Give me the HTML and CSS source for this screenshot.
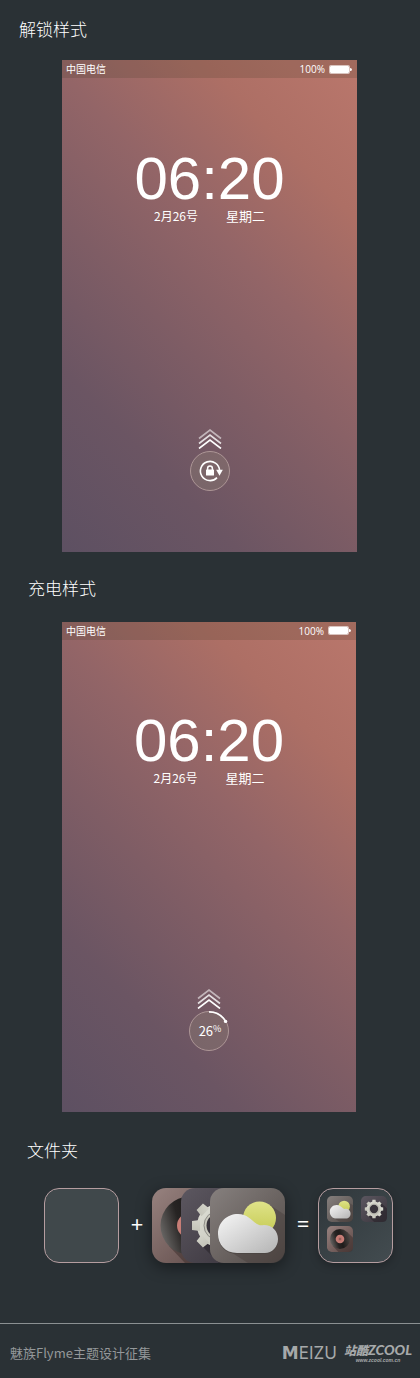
FILE: index.html
```html
<!DOCTYPE html>
<html lang="zh-CN">
<head>
  <meta charset="UTF-8" />
  <title>魅族Flyme主题设计征集</title>
  <meta name="viewport" content="width=device-width, initial-scale=1.0">
  <link rel="stylesheet" href="styles.css">
</head>
<body>

  <!-- shared app icons -->
  <svg class="sprite" width="0" height="0" aria-hidden="true">
    <defs>
      <linearGradient id="weather-bg" x1="0" y1="0" x2="1" y2="1">
        <stop offset="0" stop-color="#86807e" />
        <stop offset="1" stop-color="#514946" />
      </linearGradient>
      <linearGradient id="gear-bg" x1="0" y1="0" x2="1" y2="1">
        <stop offset="0" stop-color="#5c5760" />
        <stop offset="1" stop-color="#38333b" />
      </linearGradient>
      <linearGradient id="music-bg" x1="0" y1="0" x2="1" y2="1">
        <stop offset="0" stop-color="#97827f" />
        <stop offset="1" stop-color="#5b4644" />
      </linearGradient>
      <linearGradient id="sun" x1="0" y1="0" x2="0" y2="1">
        <stop offset="0" stop-color="#dfe389" />
        <stop offset="1" stop-color="#c5ca52" />
      </linearGradient>
      <linearGradient id="cloud" x1="0" y1="0" x2="1" y2="1">
        <stop offset="0" stop-color="#f6f6f6" />
        <stop offset="1" stop-color="#b4b4b4" />
      </linearGradient>
      <linearGradient id="gear" x1="0" y1="0" x2="1" y2="1">
        <stop offset="0" stop-color="#dedfd6" />
        <stop offset="1" stop-color="#c3c3b8" />
      </linearGradient>
      <linearGradient id="disc" x1="0" y1="0.65" x2="1" y2="0.35">
        <stop offset="0" stop-color="#6a6866" />
        <stop offset="0.35" stop-color="#272423" />
        <stop offset="0.55" stop-color="#1f1c1b" />
        <stop offset="1" stop-color="#4d4845" />
      </linearGradient>
    </defs>

    <symbol id="icon-weather" viewBox="0 0 75 75">
      <rect width="75" height="75" rx="14" fill="url(#weather-bg)" />
      <path d="M60 17L75 27V61Q75 75 61 75H38L16 61Z" fill="#463e3b" opacity="0.45" />
      <circle cx="49.5" cy="30" r="16.5" fill="url(#sun)" />
      <path d="M27 66C15 66 8 57 8 47L68 52C68 60 62 66 55 66Z" fill="#4a4442" opacity="0.7" />
      <path d="M27 65C15 65 8 56 8 46C8 34 17 26 28 26C37 26 41 32 47 36C50 38 52 37 54 37C62 37 68 43 68 51C68 59 62 65 55 65Z" fill="url(#cloud)" />
    </symbol>

    <symbol id="icon-settings" viewBox="0 0 75 75">
      <rect width="75" height="75" rx="14" fill="url(#gear-bg)" />
      <path d="M56 18L75 36V61Q75 75 61 75H38L19 56Z" fill="#29252c" opacity="0.6" />
      <g fill="url(#gear)">
        <circle cx="37.5" cy="37.5" r="21.5" />
        <path d="M32 19L33 11H42L43 19ZM32 56L33 64H42L43 56Z" />
        <path d="M32 19L33 11H42L43 19ZM32 56L33 64H42L43 56Z" transform="rotate(45 37.5 37.5)" />
        <path d="M32 19L33 11H42L43 19ZM32 56L33 64H42L43 56Z" transform="rotate(90 37.5 37.5)" />
        <path d="M32 19L33 11H42L43 19ZM32 56L33 64H42L43 56Z" transform="rotate(135 37.5 37.5)" />
      </g>
      <circle cx="37.5" cy="37.5" r="14.5" fill="#c9c9be" stroke="#8d8c86" />
      <circle cx="37.5" cy="37.5" r="12" fill="#39353c" />
    </symbol>

    <symbol id="icon-music" viewBox="0 0 75 75">
      <rect width="75" height="75" rx="14" fill="url(#music-bg)" />
      <path d="M58 17L75 34V61Q75 75 61 75H33L17 58Z" fill="#3a2b2a" opacity="0.5" />
      <circle cx="37.5" cy="37.5" r="29" fill="url(#disc)" />
      <circle cx="37.5" cy="37.5" r="12.5" fill="#c77d76" />
      <circle cx="37.5" cy="37.5" r="5" fill="none" stroke="#a8625c" />
      <circle cx="37.5" cy="37.5" r="2" fill="#3a2b2a" />
    </symbol>

    <symbol id="arrows" viewBox="0 0 24 20">
      <g fill="none" stroke="#fff" stroke-width="1.6">
        <path d="M1 9.5L12 1L23 9.5" opacity="0.55" />
        <path d="M1 14.5L12 6L23 14.5" opacity="0.8" />
        <path d="M1 19.5L12 11L23 19.5" />
      </g>
    </symbol>

    <symbol id="battery" viewBox="0 0 23 9">
      <rect x="0.5" y="0.5" width="20" height="8" rx="1" fill="none" stroke="#fff" opacity="0.6" />
      <rect x="1" y="1" width="19" height="7" rx="1" fill="#fff" />
      <path d="M21 3Q23 3 23 4.5T21 6Z" fill="#fff" />
    </symbol>
  </svg>

  <section class="section unlock">
    <h2>解锁样式</h2>
    <div class="phone">
      <div class="status-bar">
        <span class="carrier">中国电信</span>
        <span class="power">100% <svg class="battery"><use href="#battery" /></svg></span>
      </div>
      <div class="clock">06:20</div>
      <div class="date">
        <span>2月26号</span>
        <span class="weekday">星期二</span>
      </div>
      <div class="slider">
        <svg class="arrows"><use href="#arrows" /></svg>
        <button class="knob" aria-label="解锁">
          <svg viewBox="1 1 38 38">
            <path d="M27 26.6A9.6 9.6 0 1 1 29.6 19.5" fill="none" stroke="#fff" stroke-width="1.6" />
            <path d="M26.2 18.8H32.8L29.5 24.8Z" fill="#fff" />
            <path d="M17.6 19.5V17.5A2.4 2.4 0 0 1 22.4 17.5V19.5" fill="none" stroke="#fff" stroke-width="1.5" />
            <rect x="16" y="18.5" width="8" height="6" rx="0.6" fill="#fff" />
          </svg>
        </button>
      </div>
    </div>
  </section>

  <section class="section charging">
    <h2>充电样式</h2>
    <div class="phone">
      <div class="status-bar">
        <span class="carrier">中国电信</span>
        <span class="power">100% <svg class="battery"><use href="#battery" /></svg></span>
      </div>
      <div class="clock">06:20</div>
      <div class="date">
        <span>2月26号</span>
        <span class="weekday">星期二</span>
      </div>
      <div class="slider">
        <svg class="arrows"><use href="#arrows" /></svg>
        <div class="knob">
          <svg viewBox="1 1 38 38">
            <path d="M20 0.8A19.2 19.2 0 0 1 36.6 10.4" fill="none" stroke="#fff" stroke-width="1.8" />
            <circle cx="36.6" cy="10.4" r="1.7" fill="#fff" />
          </svg>
          <span class="percent">26<small>%</small></span>
        </div>
      </div>
    </div>
  </section>

  <section class="section folders">
    <h2>文件夹</h2>
    <div class="equation">
      <div class="folder"></div>
      <span class="sign">+</span>
      <div class="stack">
        <svg class="app"><use href="#icon-music" /></svg>
        <svg class="app"><use href="#icon-settings" /></svg>
        <svg class="app"><use href="#icon-weather" /></svg>
      </div>
      <span class="sign">=</span>
      <div class="folder filled">
        <svg class="mini"><use href="#icon-weather" /></svg>
        <svg class="mini"><use href="#icon-settings" /></svg>
        <svg class="mini"><use href="#icon-music" /></svg>
      </div>
    </div>
  </section>

  <footer>
    <span>魅族Flyme主题设计征集</span>
    <div class="logos">
      <span class="meizu"><b>M</b>EIZU</span>
      <span class="zcool">
        <span class="zcool-name">站酷<b>ZCOOL</b></span>
        <span class="zcool-url">www.zcool.com.cn</span>
      </span>
    </div>
  </footer>

</body>
</html>
```
FILE: styles.css
```css
* {
  box-sizing: border-box;
}

body {
  margin: 0;
  background: #2a3135;
  color: #fff;
  font-family: "Noto Sans CJK SC", "Noto Sans", sans-serif;
}

.sprite {
  position: absolute;
}

h2 {
  margin: 0;
  font-size: 17px;
  font-weight: 300;
  line-height: 22px;
}

.section {
  display: flex;
  flex-direction: column;
  padding-top: 25px;
  padding-left: 28px;
  gap: 23px;
}

.unlock {
  padding: 18px 63px 0 19px;
  gap: 20px;
}

.charging {
  padding-right: 64px;
}

.unlock .phone {
  margin-left: 43px;
}

.charging .phone {
  margin-left: 34px;
}

.phone {
  display: flex;
  flex-direction: column;
  align-items: center;
  aspect-ratio: 3 / 5;
  background: linear-gradient(46deg, #5d5062 0%, #6b5563 23%, #7f5d65 42%, #936567 60%, #ad6f65 80%, #ba776c 100%);
}

.status-bar {
  display: flex;
  justify-content: space-between;
  align-items: center;
  align-self: stretch;
  height: 18px;
  padding: 0 5px 0 4px;
  background: rgba(70, 60, 40, 0.2);
  font-size: 10px;
  line-height: 18px;
}

.power {
  display: flex;
  align-items: center;
  gap: 4px;
  font-family: "Open Sans", sans-serif;
}

.battery {
  width: 23px;
  height: 9px;
}

.clock {
  margin-top: 71px;
  font-family: "Liberation Sans", sans-serif;
  font-size: 60px;
  line-height: 60px;
}

.date {
  display: flex;
  align-items: center;
  gap: 28px;
  font-size: 12px;
  line-height: 13px;
}

.weekday {
  font-size: 13px;
}

.slider {
  display: flex;
  flex-direction: column;
  align-items: center;
  gap: 2px;
  margin-top: auto;
  margin-bottom: 61px;
}

.arrows {
  width: 24px;
  height: 20px;
}

.knob {
  display: grid;
  place-items: center;
  width: 40px;
  height: 40px;
  padding: 0;
  border: 1px solid #ad9696;
  border-radius: 50%;
  background: rgba(140, 125, 115, 0.4);
  color: #fff;
}

.knob svg {
  width: 38px;
  height: 38px;
  overflow: visible;
}

.knob > * {
  grid-area: 1 / 1;
}

.percent {
  display: flex;
  padding-left: 2px;
  font-size: 13px;
  line-height: 16px;
}

.percent small {
  font-size: 9px;
  line-height: 12px;
}

.folders {
  padding-top: 27px;
  padding-left: 27px;
  gap: 27px;
}

.equation {
  display: grid;
  grid-template-columns: 75px 1fr 133px 1fr 75px;
  align-items: center;
  padding: 0 27px 0 17px;
}

.folder {
  height: 75px;
  border: 1px solid #b59da0;
  border-radius: 15px;
  background: #40484b;
}

.filled {
  display: grid;
  grid-template-columns: 26px 26px;
  justify-content: space-between;
  align-content: start;
  gap: 4px;
  padding: 7px 5px 8px 8px;
  background: linear-gradient(135deg, #2f373b, #434c50);
  box-shadow: 0 3px 8px rgba(0, 0, 0, 0.25);
}

.sign {
  padding: 0 0 4px 3px;
  font-family: "Noto Sans", sans-serif;
  font-size: 22px;
  line-height: 24px;
  text-align: center;
}

.stack {
  display: flex;
  filter: drop-shadow(0 4px 8px rgba(0, 0, 0, 0.45));
}

.app {
  flex: none;
  width: 75px;
  height: 75px;
}

.app + .app {
  margin-left: -46px;
}

.mini {
  width: 26px;
  height: 26px;
}

footer {
  display: flex;
  justify-content: space-between;
  align-items: center;
  height: 55px;
  margin-top: 60px;
  padding: 4px 8px 0 10px;
  border-top: 1px solid #8b9092;
  color: #94989a;
  font-size: 13px;
}

.logos {
  display: flex;
  align-items: center;
  gap: 7px;
  color: #a6a9aa;
}

.meizu {
  font-family: Inter, sans-serif;
  font-size: 17px;
  line-height: 16px;
}

.meizu b {
  font-family: "DejaVu Sans", sans-serif;
}

.zcool {
  display: flex;
  flex-direction: column;
  align-items: center;
  font-style: italic;
  font-weight: 900;
}

.zcool-name {
  font-size: 12px;
  line-height: 14px;
}

.zcool-name b {
  font-family: Lato, sans-serif;
  font-size: 14px;
  font-weight: 900;
}

.zcool-url {
  font-family: "Liberation Sans", sans-serif;
  font-size: 5px;
  line-height: 6px;
}
```
